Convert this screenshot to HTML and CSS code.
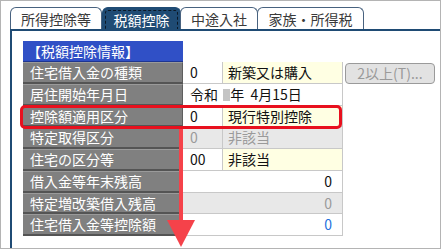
FILE: index.html
```html
<!DOCTYPE html>
<html lang="ja">
<head>
    <meta charset="UTF-8">
    <meta name="viewport" content="width=device-width, initial-scale=1.0">
    <title>税額控除</title>
    <link rel="stylesheet" href="styles.css">
</head>
<body>
    <div class="frame">
        <div class="tabs">
            <div class="tab tab-1">所得控除等</div>
            <div class="tab tab-2 active"><span class="focus">税額控除</span></div>
            <div class="tab tab-3">中途入社</div>
            <div class="tab tab-4">家族・所得税</div>
        </div>
        <div class="panel">
            <div class="table">
                <div class="row head-row">
                    <div class="head">【税額控除情報】</div>
                </div>
                <div class="row">
                    <div class="label">住宅借入金の種類</div>
                    <div class="cell code">0</div>
                    <div class="cell name yellow">新築又は購入</div>
                    <div class="multi-btn">2以上(T)...</div>
                </div>
                <div class="row">
                    <div class="label">居住開始年月日</div>
                    <div class="cell wide date">令和 <span class="era-box"></span>年&nbsp;&nbsp;4月15日</div>
                </div>
                <div class="row">
                    <div class="label">控除額適用区分</div>
                    <div class="cell code">0</div>
                    <div class="cell name yellow">現行特別控除</div>
                </div>
                <div class="row">
                    <div class="label">特定取得区分</div>
                    <div class="cell code disabled">0</div>
                    <div class="cell name disabled">非該当</div>
                </div>
                <div class="row">
                    <div class="label">住宅の区分等</div>
                    <div class="cell code">00</div>
                    <div class="cell name yellow">非該当</div>
                </div>
                <div class="row">
                    <div class="label">借入金等年末残高</div>
                    <div class="cell wide num">0</div>
                </div>
                <div class="row">
                    <div class="label">特定増改築借入残高</div>
                    <div class="cell wide num disabled">0</div>
                </div>
                <div class="row">
                    <div class="label">住宅借入金等控除額</div>
                    <div class="cell wide num total">0</div>
                </div>
            </div>
        </div>

        <div class="highlight-box"></div>
        <svg class="arrow" width="32" height="120" viewBox="0 0 32 120">
            <rect x="13" y="0" width="4" height="94" fill="#f5424a"/>
            <polygon points="1,91 29,91 15,118" fill="#f5424a"/>
        </svg>
    </div>
</body>
</html>
```

FILE: styles.css
```css
body {
    margin: 0;
    font-family: "Noto Sans CJK JP", "Noto Sans", sans-serif;
    background: #ffffff;
}
.frame {
    position: relative;
    width: 439px;
    height: 247px;
    border: 1px solid #b4b4b4;
    background: #ffffff;
    overflow: hidden;
}
.tabs {
    display: flex;
    margin-top: 6px;
    padding-left: 9px;
    height: 22px;
}
.tab {
    box-sizing: border-box;
    height: 22px;
    border: 1px solid #48627f;
    border-bottom: none;
    border-radius: 6px 6px 0 0;
    font-size: 14px;
    line-height: 22px;
    color: #3a3a3a;
    text-align: center;
    background: #fff;
}
.tab-1 { width: 92px; }
.tab-2 { width: 79px; }
.tab-3 { width: 78px; margin-left: -1px; }
.tab-4 { width: 107px; margin-left: -1px; }
.tab.active {
    background: #1f4b74;
    border-color: #1f4b74;
    color: #fff;
    padding: 2px 2px 0;
}
.tab.active .focus {
    display: block;
    height: 19px;
    line-height: 18px;
    border: 1px dashed #0b1826;
    border-bottom: none;
    border-radius: 3px 3px 0 0;
    box-sizing: border-box;
}
.panel {
    margin-left: 9px;
    border-top: 2px solid #1f4b74;
    border-left: 2px solid #1f4b74;
    height: 216px;
    padding: 10px 0 0 11px;
}
.row {
    display: flex;
    height: 21.75px;
}
.head-row {
    height: 21px;
}
.head {
    width: 160px;
    background: #3050c6;
    color: #fff;
    font-size: 14px;
    line-height: 21px;
    box-sizing: border-box;
    padding-left: 4px;
    border-bottom: 1px solid #1e3590;
}
.label {
    width: 160px;
    box-sizing: border-box;
    background: #808080;
    color: #fff;
    font-size: 14px;
    line-height: 19px;
    padding-left: 7px;
    border-top: 1px solid #9a9a9a;
    border-bottom: 2px solid #545454;
    border-right: 1px solid #5e5e5e;
}
.cell {
    box-sizing: border-box;
    font-size: 14px;
    line-height: 20px;
    color: #111;
    background: #fff;
    border-bottom: 1px solid #c8c8c8;
    border-right: 1px solid #c8c8c8;
}
.code {
    width: 40px;
    padding-left: 7px;
}
.name {
    width: 120px;
    padding-left: 5px;
}
.wide {
    width: 160px;
}
.date {
    padding-left: 7px;
}
.num {
    text-align: right;
    padding-right: 10px;
}
.yellow {
    background: #ffffe3;
}
.disabled {
    background: #e8e8e8;
    color: #9a9a9a;
}
.total {
    color: #1f6fdc;
}
.era-box {
    display: inline-block;
    width: 7px;
    height: 12px;
    background: #c4c4c4;
    vertical-align: -1px;
    margin-left: 2px;
}
.multi-btn {
    box-sizing: border-box;
    margin-left: 2px;
    margin-top: 1px;
    width: 90px;
    height: 21px;
    border: 1px solid #9a9a9a;
    border-radius: 4px;
    background: #e2e2e2;
    color: #9a9a9a;
    font-size: 14px;
    line-height: 19px;
    text-align: center;
}
.highlight-box {
    position: absolute;
    left: 19px;
    top: 104px;
    width: 322px;
    height: 24px;
    box-sizing: border-box;
    border: 3px solid #e8101e;
    border-radius: 5px;
}
.arrow {
    position: absolute;
    left: 165px;
    top: 128px;
}
```
